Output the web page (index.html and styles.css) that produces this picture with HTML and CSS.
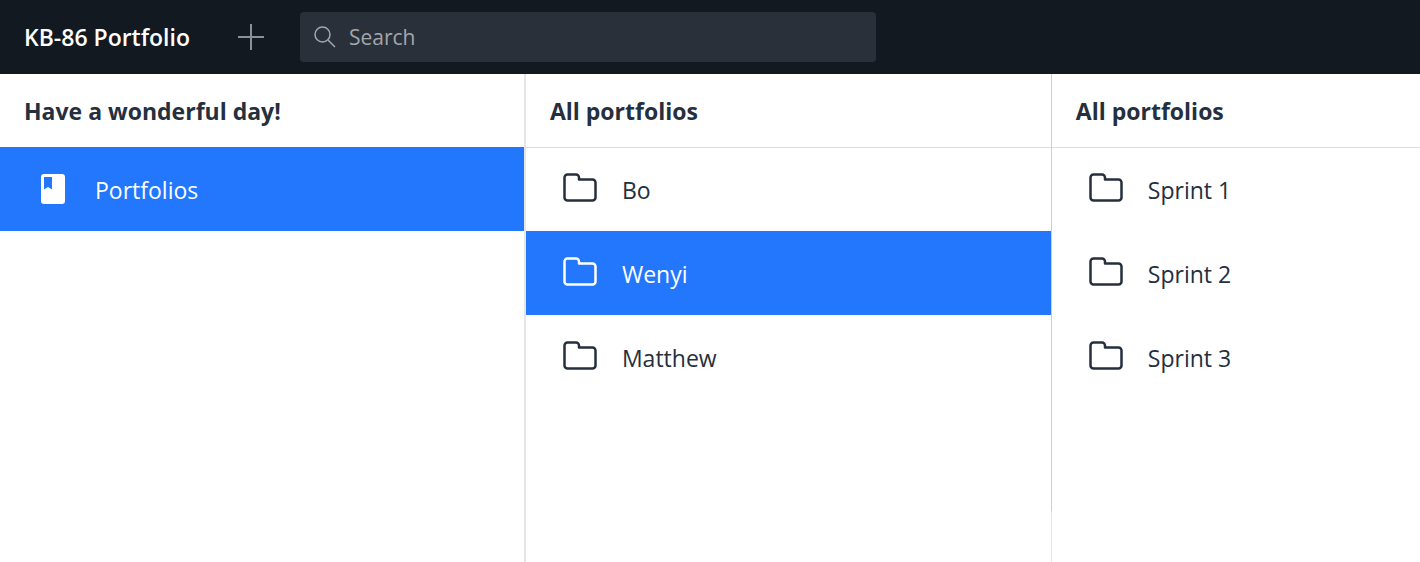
FILE: index.html
```html
<!DOCTYPE html>
<html lang="en">
<head>
<meta charset="utf-8">
<meta name="viewport" content="width=device-width, initial-scale=1">
<title>KB-86 Portfolio</title>
<link rel="stylesheet" href="styles.css">
</head>
<body>
<svg class="sprite" aria-hidden="true">
  <symbol id="folder" viewBox="0 0 36 32">
    <path d="M2.5 6V25.5a3 3 0 0 0 3 3h25a3 3 0 0 0 3-3V10.500a3 3 0 0 0-3-3H17V5.500a3 3 0 0 0-3-3H5.500a3 3 0 0 0-3 3z" fill="none" stroke="currentColor" stroke-width="2.500" stroke-linejoin="round"/>
  </symbol>
</svg>
<header class="topbar">
  <h1 class="topbar-title">KB-86 Portfolio</h1>
  <button class="add" type="button" aria-label="Add">
    <svg class="add-icon" viewBox="0 0 26 26"><path d="M13 0v26M0 13h26" stroke="currentColor" stroke-width="2"/></svg>
  </button>
  <label class="search">
    <svg class="search-icon" viewBox="0 0 22 22" aria-hidden="true"><circle cx="8.500" cy="8.500" r="7.500" fill="none" stroke="currentColor" stroke-width="1.500"/><path d="M14 14l7 7" stroke="currentColor" stroke-width="1.500"/></svg>
    <input class="search-input" type="search" placeholder="Search" aria-label="Search">
  </label>
</header>
<main class="columns">
  <section class="column column-root">
    <h2 class="column-title">Have a wonderful day!</h2>
    <div class="list">
      <button class="item item-selected" type="button">
        <svg class="book" viewBox="0 0 24 30" aria-hidden="true"><path fill-rule="evenodd" d="M3 0H21a3 3 0 0 1 3 3V27a3 3 0 0 1-3 3H3a3 3 0 0 1-3-3V3a3 3 0 0 1 3-3zM3 3V15.500L7 13l4 2.500V3z" fill="currentColor"/></svg>
        <span>Portfolios</span>
      </button>
    </div>
  </section>
  <section class="column column-middle">
    <h2 class="column-title">All portfolios</h2>
    <div class="list list-ruled">
      <button class="item" type="button"><svg class="folder" aria-hidden="true"><use href="#folder"/></svg><span>Bo</span></button>
      <button class="item item-selected" type="button"><svg class="folder" aria-hidden="true"><use href="#folder"/></svg><span>Wenyi</span></button>
      <button class="item" type="button"><svg class="folder" aria-hidden="true"><use href="#folder"/></svg><span>Matthew</span></button>
    </div>
  </section>
  <section class="column column-last">
    <h2 class="column-title">All portfolios</h2>
    <div class="list list-ruled">
      <button class="item" type="button"><svg class="folder" aria-hidden="true"><use href="#folder"/></svg><span>Sprint 1</span></button>
      <button class="item" type="button"><svg class="folder" aria-hidden="true"><use href="#folder"/></svg><span>Sprint 2</span></button>
      <button class="item" type="button"><svg class="folder" aria-hidden="true"><use href="#folder"/></svg><span>Sprint 3</span></button>
    </div>
  </section>
</main>
</body>
</html>
```

FILE: styles.css
```css
* { box-sizing: border-box; }

body {
  margin: 0;
  min-height: 100vh;
  display: flex;
  flex-direction: column;
  background: #fff;
  color: #252f3e;
  font-family: "Segoe UI", "Open Sans", "Noto Sans", sans-serif;
  font-size: 23px;
  line-height: 32px;
}

button, input { font: inherit; }

.sprite {
  position: absolute;
  width: 0;
  height: 0;
}

.topbar {
  display: flex;
  align-items: center;
  padding: 12px 24px;
  background: #121921;
  color: #fff;
}

.topbar-title {
  margin: 0;
  font-size: 23px;
  font-weight: 600;
}

.add {
  display: flex;
  margin: 0 36px 0 48px;
  padding: 0;
  border: 0;
  background: none;
  color: #8c9197;
}

.add-icon {
  width: 26px;
  height: 26px;
}

.search {
  flex: 0 1 576px;
  display: flex;
  align-items: center;
  gap: 13px;
  height: 50px;
  padding: 0 14px;
  border-radius: 4px;
  background: #2a3039;
  color: #a3a6ab;
}

.search-icon {
  flex: none;
  width: 22px;
  height: 22px;
}

.search-input {
  flex: 1;
  min-width: 0;
  padding: 0;
  border: 0;
  outline: 0;
  background: none;
  color: #fff;
  font-size: 21px;
}

.search-input::placeholder { color: #a3a6ab; }

.columns {
  flex: 1;
  display: grid;
  grid-template-columns: 10fr 10fr 7fr;
}

.column { min-width: 0; }

.column-root { border-right: 2px solid #e6e6e6; }

.column-middle {
  border-right: 1px solid;
  border-image: linear-gradient(#cdced6 89%, #e6e6e6 90%) 1;
}

.column-title {
  margin: 0;
  padding: 21px 24px 20px;
  font-size: 23px;
  font-weight: 700;
}

.list-ruled { box-shadow: inset 0 1px #dcdde1; }

.item {
  display: flex;
  align-items: center;
  width: 100%;
  height: 84px;
  padding: 2px 36px 0;
  border: 0;
  background: none;
  color: inherit;
  text-align: left;
}

.item-selected {
  background: #2277fd;
  color: #fff;
}

.folder {
  flex: none;
  width: 36px;
  height: 32px;
  margin: 0 24px 4px 0;
}

.book {
  flex: none;
  width: 24px;
  height: 30px;
  margin: 0 30px 2px 5px;
}
```
